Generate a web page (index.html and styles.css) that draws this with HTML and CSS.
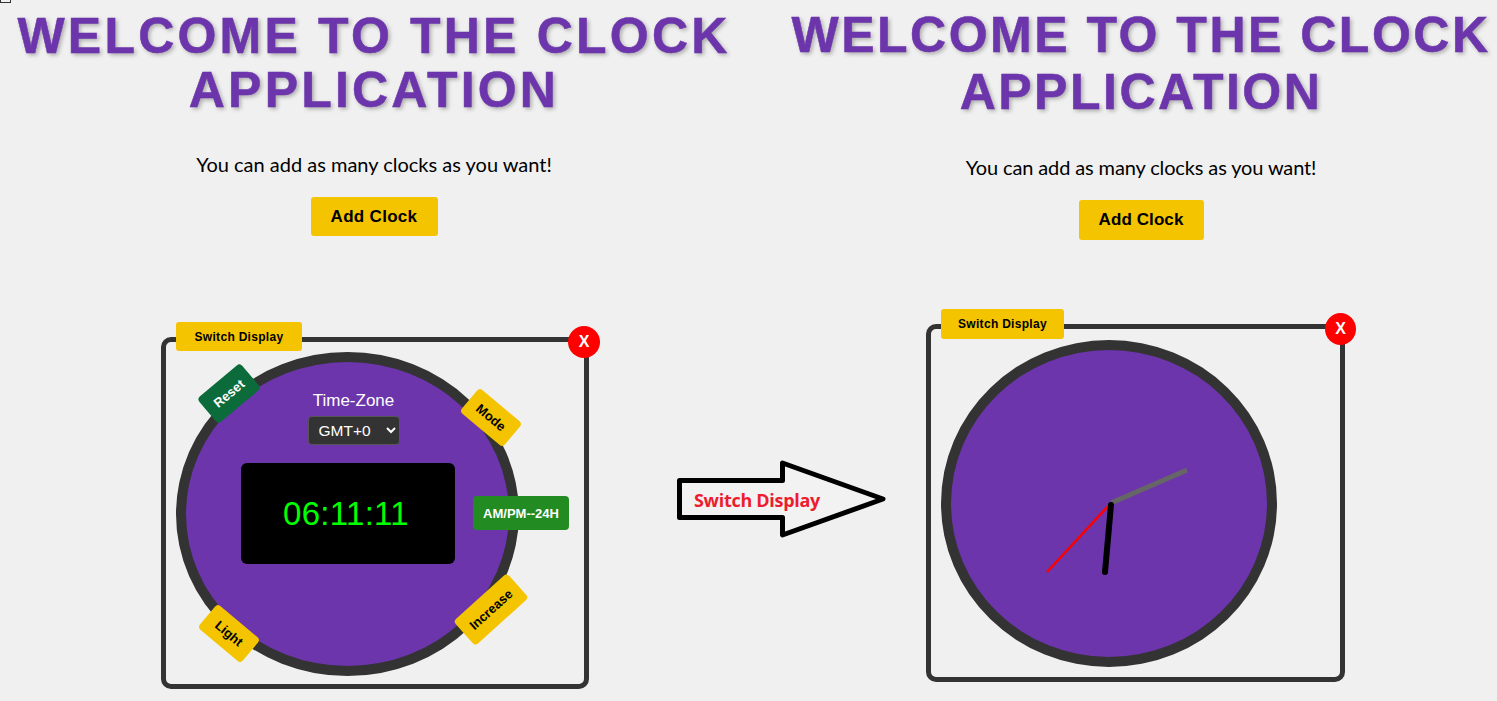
FILE: index.html
```html
<!DOCTYPE html>
<html lang="en">
<head>
<meta charset="utf-8">
<title>Clock Application</title>
<link rel="stylesheet" href="styles.css">
</head>
<body>
<main class="app">
  <span class="corner-mark"></span>
  <section class="panel panel-left">
    <h1 class="title">WELCOME TO THE CLOCK APPLICATION</h1>
    <p class="lead">You can add as many clocks as you want!</p>
    <button class="add-btn">Add Clock</button>
    <div class="card">
      <button class="switch">Switch Display</button>
      <button class="close">X</button>
      <div class="dial">
        <button class="tag tag-reset">Reset</button>
        <button class="tag tag-mode">Mode</button>
        <button class="tag tag-light">Light</button>
        <button class="tag tag-increase">Increase</button>
        <button class="ampm">AM/PM--24H</button>
        <div class="zone">
          <label class="zone-label" for="tz">Time-Zone</label>
          <select class="zone-select" id="tz"><option>GMT+0</option></select>
        </div>
        <div class="screen">06:11:11</div>
      </div>
    </div>
  </section>
  <section class="panel panel-right">
    <h1 class="title">WELCOME TO THE CLOCK APPLICATION</h1>
    <p class="lead">You can add as many clocks as you want!</p>
    <button class="add-btn">Add Clock</button>
    <div class="card">
      <button class="switch">Switch Display</button>
      <button class="close">X</button>
      <div class="dial">
        <svg class="hands" viewBox="0 0 336 327" aria-hidden="true">
          <line class="hand-second" x1="170" y1="163" x2="106" y2="232"/>
          <line class="hand-minute" x1="170" y1="163" x2="246" y2="130"/>
          <line class="hand-hour" x1="170" y1="165" x2="164" y2="232"/>
        </svg>
      </div>
    </div>
  </section>
  <div class="callout">
    <svg class="callout-arrow" viewBox="0 0 213 80" aria-hidden="true">
      <path d="M2.5 21.5H105.5V4L206 40L105.5 76V58.5H2.5Z"/>
    </svg>
    <span class="callout-text">Switch Display</span>
  </div>
</main>
</body>
</html>
```

FILE: styles.css
```css
* { box-sizing: border-box; }
html, body { margin: 0; height: 100%; }
body {
  background: #f0f0f0;
  font-family: "Liberation Sans", Arial, sans-serif;
  overflow: hidden;
}
.app {
  position: relative;
  display: grid;
  grid-template-columns: 748px 712px;
  column-gap: 37px;
  height: 701px;
}
.corner-mark {
  position: absolute;
  left: 0;
  top: 0;
  width: 11px;
  height: 3px;
  border: 1px solid #333;
  border-top: 0;
}
.panel {
  display: flex;
  flex-direction: column;
  align-items: center;
  min-width: 0;
}
.title {
  margin: 0;
  width: 100%;
  color: #6c35ab;
  font-size: 50px;
  font-weight: 700;
  line-height: 54px;
  letter-spacing: 3.2px;
  text-align: center;
  text-shadow: 2px 2px 4px rgba(0, 0, 0, .3);
  -webkit-text-stroke: .5px #6c35ab;
}
.panel-left .title { padding-top: 9px; }
.panel-right .title { padding-top: 7px; line-height: 57px; letter-spacing: 2.5px; }
.lead {
  margin: 35px 0 0;
  color: #000;
  font-family: "Lato", sans-serif;
  font-size: 20px;
  line-height: 24px;
}
.panel-right .lead { margin-top: 34px; letter-spacing: -.13px; }
.add-btn {
  width: 127px;
  height: 39px;
  margin-top: 21px;
  padding: 0;
  border: 0;
  border-radius: 3px;
  background: #f5c400;
  color: #000;
  font: 700 17px "Liberation Sans", Arial, sans-serif;
  letter-spacing: .3px;
}
.panel-right .add-btn { width: 125px; height: 40px; letter-spacing: .1px; }
.card {
  position: relative;
  flex: none;
  border: 5px solid #333;
  border-radius: 10px;
}
.panel-left .card { width: 428px; height: 352px; margin: 101px 0 0 2px; padding: 10px 0 0 10px; }
.panel-right .card { width: 419px; height: 358px; margin: 84px 0 0 -11px; padding: 11px 0 0 10px; }
.switch {
  position: absolute;
  height: 29px;
  padding: 0;
  border: 0;
  border-radius: 3px;
  background: #f5c400;
  color: #000;
  font: 700 12px "Liberation Sans", Arial, sans-serif;
  letter-spacing: .3px;
}
.panel-left .switch { left: 10px; top: -20px; width: 126px; }
.panel-right .switch { left: 10px; top: -20px; width: 123px; height: 30px; }
.close {
  position: absolute;
  width: 32px;
  height: 32px;
  padding: 0;
  border: 0;
  border-radius: 50%;
  background: #f00;
  color: #fff;
  font: 700 16px "Liberation Sans", Arial, sans-serif;
}
.panel-left .close { right: -16px; top: -16px; }
.panel-right .close { right: -16px; top: -16px; width: 31px; }
.dial {
  position: relative;
  display: flex;
  flex-direction: column;
  align-items: center;
  border: 10px solid #333;
  border-radius: 50%;
  background: #6c35ab;
}
.panel-left .dial { width: 343px; height: 324px; }
.panel-right .dial { width: 336px; height: 327px; }
.zone {
  display: flex;
  flex-direction: column;
  align-items: center;
  margin: 29px 0 0 12px;
}
.zone-label {
  color: #fff;
  font-size: 17px;
  line-height: 20px;
}
.zone-select {
  width: 92px;
  height: 29px;
  margin-top: 5px;
  padding: 0 0 0 6px;
  border: 1px solid #555;
  border-radius: 4px;
  background-color: #333;
  color: #fff;
  font: 15.5px "Liberation Sans", Arial, sans-serif;
}
.screen {
  display: flex;
  align-items: center;
  justify-content: center;
  width: 214px;
  height: 101px;
  margin-top: 18px;
  padding-right: 3px;
  border-radius: 6px;
  background: #000;
  color: #0f0;
  font-size: 33px;
  letter-spacing: .3px;
}
.tag {
  position: absolute;
  padding: 0;
  border: 0;
  border-radius: 4px;
  background: #f5c400;
  color: #000;
  font: 700 13px "Liberation Sans", Arial, sans-serif;
}
.tag-reset { left: 15px; top: 15px; width: 56px; height: 33px; background: #0b6b3a; color: #fff; transform: rotate(-40deg); }
.tag-mode { left: 277px; top: 40px; width: 56px; height: 31px; transform: rotate(40deg); }
.tag-light { left: 15px; top: 256px; width: 56px; height: 31px; transform: rotate(40deg); }
.tag-increase { left: 269px; top: 231px; width: 72px; height: 33px; transform: rotate(-42deg); }
.ampm {
  position: absolute;
  left: 287px;
  top: 134px;
  width: 96px;
  height: 34px;
  padding: 0;
  border: 0;
  border-radius: 4px;
  background: #228b22;
  color: #fff;
  font: 700 13px "Liberation Sans", Arial, sans-serif;
}
.hands {
  position: absolute;
  left: -10px;
  top: -10px;
  width: 336px;
  height: 327px;
}
.hand-second { stroke: #f00; stroke-width: 2.5; }
.hand-minute { stroke: #666; stroke-width: 5; }
.hand-hour { stroke: #000; stroke-width: 6; stroke-linecap: round; }
.callout {
  position: absolute;
  left: 677px;
  top: 459px;
  width: 213px;
  height: 80px;
}
.callout-arrow { display: block; width: 100%; height: 100%; }
.callout-arrow path { fill: #f2f2f2; stroke: #000; stroke-width: 5; stroke-linejoin: round; }
.callout-text {
  position: absolute;
  left: 17px;
  top: 29px;
  color: #ed1c2e;
  font: 700 18px "Open Sans", sans-serif;
  line-height: 24px;
  letter-spacing: -.3px;
}
```
